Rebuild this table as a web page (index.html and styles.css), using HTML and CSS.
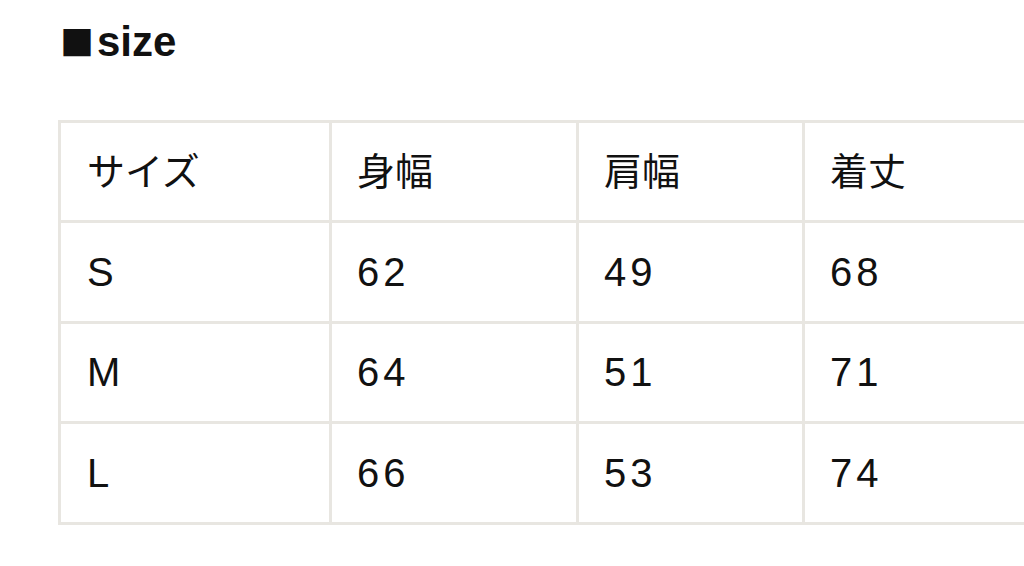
FILE: index.html
```html
<!DOCTYPE html>
<html lang="ja">
<head>
<meta charset="utf-8">
<link rel="stylesheet" href="styles.css">
</head>
<body>
<div class="page">
  <h2 class="title"><span class="mark">■</span>size</h2>
  <table class="size-table">
    <colgroup>
      <col class="c1"><col class="c2"><col class="c3"><col class="c4">
    </colgroup>
    <tr class="head"><td>サイズ</td><td>身幅</td><td>肩幅</td><td>着丈</td></tr>
    <tr><td>S</td><td>62</td><td>49</td><td>68</td></tr>
    <tr><td>M</td><td>64</td><td>51</td><td>71</td></tr>
    <tr><td>L</td><td>66</td><td>53</td><td>74</td></tr>
  </table>
</div>
</body>
</html>
```
FILE: styles.css
```css
html, body {
  margin: 0;
  padding: 0;
  background: #fff;
  overflow: hidden;
}
.page {
  width: 1024px;
  height: 566px;
  overflow: hidden;
  padding: 18px 0 0 58px;
  box-sizing: border-box;
  font-family: "Liberation Sans", "Noto Sans CJK JP", sans-serif;
  color: #111;
}
.title {
  margin: 0 0 54px 2px;
  font-size: 42px;
  font-weight: bold;
  line-height: 48px;
  height: 48px;
  display: flex;
  align-items: center;
}
.mark {
  font-family: "Noto Sans CJK JP", sans-serif;
  font-weight: normal;
  font-size: 34px;
  margin-right: 3px;
}
.size-table {
  border-collapse: collapse;
  table-layout: fixed;
  width: 1000px;
}
.c1 { width: 271px; }
.c2 { width: 247px; }
.c3 { width: 226px; }
.c4 { width: 256px; }
.size-table tr {
  height: 100.4px;
}
.size-table td {
  border: 3px solid #e8e6e1;
  padding: 0 0 0 26px;
  font-size: 40px;
  letter-spacing: 4px;
  line-height: 1;
  vertical-align: middle;
  white-space: nowrap;
}
.size-table td + td {
  padding-left: 25px;
}
.size-table .head td {
  font-size: 38px;
  letter-spacing: 0;
}
```
